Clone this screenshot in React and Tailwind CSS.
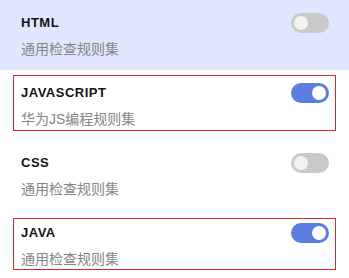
import React from "react";

const items = [
  { title: "HTML", desc: "通用检查规则集", on: false, active: true, box: null },
  { title: "JAVASCRIPT", desc: "华为JS编程规则集", on: true, active: false, box: "js" },
  { title: "CSS", desc: "通用检查规则集", on: false, active: false, box: null },
  { title: "JAVA", desc: "通用检查规则集", on: true, active: false, box: "java" },
];

function Toggle({ on }) {
  return (
    <div
      className={
        "flex h-5 w-[38px] items-center rounded-full px-[3px] " +
        (on ? "justify-end bg-[#5b7ddf]" : "justify-start bg-[#c9c9c9]")
      }
    >
      <div className={"h-[14px] w-[14px] rounded-full " + (on ? "bg-white" : "bg-[#f2f2f2]")} />
    </div>
  );
}

export default function App() {
  return (
    <div
      className="w-[349px] h-[278px] overflow-hidden bg-white"
      style={{ fontFamily: '"Liberation Sans", Arial, "Noto Sans CJK SC", sans-serif' }}
    >
      {items.map((it) => (
        <div
          key={it.title}
          className={"relative h-[70px] pl-[21px] pr-[20px] pt-[13px] " + (it.active ? "bg-[#e0e6fd]" : "bg-white")}
        >
          {it.box === "js" && (
            <div className="pointer-events-none absolute left-[13px] right-[13px] top-[5px] h-[56px] border border-[#e3222b]" />
          )}
          {it.box === "java" && (
            <div className="pointer-events-none absolute left-[13px] right-[13px] top-[8px] h-[52px] border border-[#e3222b]" />
          )}
          <div className="flex h-5 items-center justify-between">
            <span className="text-[13px] font-bold leading-4 tracking-[0.5px] text-[#141414]">{it.title}</span>
            <Toggle on={it.on} />
          </div>
          <div className="mt-[6px] text-[14px] leading-5 text-[#858585]">{it.desc}</div>
        </div>
      ))}
    </div>
  );
}
